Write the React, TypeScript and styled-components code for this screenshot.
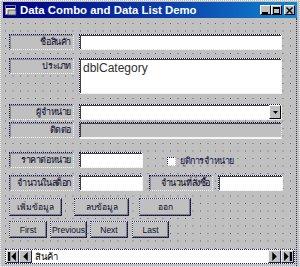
import React from 'react'
import styled, { createGlobalStyle, css } from 'styled-components'

const GlobalStyle = createGlobalStyle`
  html, body {
    margin: 0;
    padding: 0;
    background: #c0c0c0;
  }
  body {
    font-family: "Liberation Sans", "Noto Sans", "DejaVu Sans", sans-serif;
    font-size: 11px;
  }
`

const Window = styled.div`
  box-sizing: border-box;
  width: 300px;
  height: 267px;
  background: #c0c0c0;
  border: 1px dotted #f0f0f0;
  padding: 1px 2px 0 2px;
  display: flex;
  flex-direction: column;
  overflow: hidden;
`

const TitleBar = styled.div`
  height: 16px;
  flex: none;
  background: linear-gradient(to right, #000080 0%, #0a3ea8 55%, #1084d0 100%);
  display: flex;
  align-items: center;
  padding: 0 2px 0 2px;
`

const TitleText = styled.span`
  color: #fff;
  font-weight: 700;
  font-size: 11.4px;
  margin-left: 3px;
  flex: 1;
  white-space: nowrap;
`

const CaptionButton = styled.div<{ $gap?: number }>`
  box-sizing: border-box;
  width: 11px;
  height: 10px;
  margin-left: ${p => p.$gap ?? 0}px;
  background: #c0c0c0;
  border: 1px solid;
  border-color: #fff #000 #000 #fff;
  display: flex;
  align-items: center;
  justify-content: center;
`

const Form = styled.div`
  flex: 1;
  background-color: #c0c0c0;
  background-image: conic-gradient(from 0deg at 1px 1px, transparent 270deg, #5a5a5a 0);
  background-size: 7.5px 7.5px;
  background-position: 2px 5px;
  display: flex;
  flex-direction: column;
  border-right: 1px dotted #303060;
`

const Rows = styled.div`
  padding-left: 6px;
  display: flex;
  flex-direction: column;
`

const Row = styled.div<{ $top: number }>`
  display: flex;
  align-items: flex-start;
  margin-top: ${p => p.$top}px;
`

const FieldLabel = styled.div<{ $w?: number; $ml?: number }>`
  box-sizing: border-box;
  width: ${p => p.$w ?? 65}px;
  height: 16px;
  margin-left: ${p => p.$ml ?? 0}px;
  background: #c0c0c0;
  border: 1px dotted;
  border-color: #10105a #f6f6f6 #f6f6f6 #10105a;
  box-shadow: inset 1px 1px 0 #8a8a9a;
  display: flex;
  align-items: center;
  justify-content: flex-end;
  padding-right: 2px;
  color: #06062a;
  font-size: 9px;
  letter-spacing: -0.4px;
  white-space: nowrap;
  overflow: hidden;
`

const TextBox = styled.div<{ $w: number; $h?: number; $ml?: number; $gray?: boolean }>`
  box-sizing: border-box;
  width: ${p => p.$w}px;
  height: ${p => p.$h ?? 16}px;
  margin-left: ${p => p.$ml ?? 5}px;
  border: 1px dotted;
  border-color: #10105a #e8e8e8 #e8e8e8 #10105a;
  box-shadow: inset 1px 1px 0 #404040;
  display: flex;
  align-items: flex-start;
  ${p =>
    p.$gray
      ? css`
          background: #c0c0c0;
          border-bottom: 2px solid #f4f4f4;
        `
      : css`
          background: #fff;
        `}
`

const ListText = styled.span`
  color: #303030;
  font-size: 12px;
  margin: 2px 0 0 3px;
`

const DropButton = styled.div`
  box-sizing: border-box;
  width: 12px;
  height: 14px;
  margin-left: auto;
  background: #c0c0c0;
  border: 1px solid;
  border-color: #fff #000 #000 #fff;
  display: flex;
  align-items: center;
  justify-content: center;
`

const CheckWrap = styled.div`
  display: flex;
  align-items: center;
  margin: 2px 0 0 24px;
  color: #10104a;
  font-size: 9px;
  letter-spacing: -0.4px;
`

const CheckBox = styled.div`
  box-sizing: border-box;
  width: 9px;
  height: 9px;
  background: #fff;
  border: 1px dotted;
  border-color: #10105a #c0c0c0 #c0c0c0 #10105a;
  margin-right: 4px;
`

const Button = styled.div<{ $w: number; $h: number; $ml: number }>`
  box-sizing: border-box;
  width: ${p => p.$w}px;
  height: ${p => p.$h}px;
  margin-left: ${p => p.$ml}px;
  background: #c0c0c0;
  border: 1px solid;
  border-color: #f4f4f4 #10104a #10104a #f4f4f4;
  box-shadow: inset -1px -1px 0 #808080;
  outline: 1px dotted #30306a;
  outline-offset: -1px;
  display: flex;
  align-items: center;
  justify-content: center;
  color: #101030;
  font-size: 8.5px;
  white-space: nowrap;
`

const DataControl = styled.div`
  box-sizing: border-box;
  height: 15px;
  margin: 11px 0 0 2px;
  width: 290px;
  display: flex;
  align-items: stretch;
  background: #fff;
  border: 1px dotted #20206a;
`

const NavButton = styled.div`
  box-sizing: border-box;
  width: 13px;
  flex: none;
  background: #c0c0c0;
  border: 1px solid;
  border-color: #f4f4f4 #202040 #202040 #f4f4f4;
  display: flex;
  align-items: center;
  justify-content: center;
`

const Caption = styled.span`
  flex: 1;
  color: #000;
  font-size: 9.5px;
  padding-left: 3px;
  line-height: 13px;
`

const Tri = ({ dir, bar }: { dir: 'l' | 'r'; bar?: boolean }) => (
  <svg width="9" height="9" viewBox="0 0 8 8">
    {dir === 'l' ? (
      <>
        {bar && <rect x="0" y="0" width="2" height="8" fill="#000" />}
        <polygon points={bar ? '7,0 3,4 7,8' : '6,0 2,4 6,8'} fill="#000" />
      </>
    ) : (
      <>
        <polygon points={bar ? '1,0 5,4 1,8' : '2,0 6,4 2,8'} fill="#000" />
        {bar && <rect x="6" y="0" width="2" height="8" fill="#000" />}
      </>
    )}
  </svg>
)

const FormIcon = () => (
  <svg width="12" height="11" viewBox="0 0 12 11">
    <rect x="0.5" y="0.5" width="10" height="9" fill="#fff" stroke="#808080" />
    <rect x="1" y="1" width="9" height="2" fill="#000080" />
    <rect x="3" y="5" width="8" height="5" fill="#c0c0c0" stroke="#404040" strokeWidth="0.8" />
  </svg>
)

const App = () => {
  return (
    <>
      <GlobalStyle />
      <Window>
        <TitleBar>
          <FormIcon />
          <TitleText>Data Combo and Data List Demo</TitleText>
          <CaptionButton>
            <svg width="7" height="7" viewBox="0 0 7 7"><rect x="0" y="5" width="6" height="2" fill="#000" /></svg>
          </CaptionButton>
          <CaptionButton>
            <svg width="7" height="7" viewBox="0 0 7 7"><rect x="0.5" y="0.5" width="6" height="6" fill="none" stroke="#000" /><rect x="0" y="0" width="7" height="2" fill="#000" /></svg>
          </CaptionButton>
          <CaptionButton $gap={2}>
            <svg width="7" height="7" viewBox="0 0 7 7"><path d="M0.5 0.5 L6.5 6.5 M6.5 0.5 L0.5 6.5" stroke="#000" strokeWidth="1.4" /></svg>
          </CaptionButton>
        </TitleBar>
        <Form>
          <Rows>
            <Row $top={16}>
              <FieldLabel>ชื่อสินค้า</FieldLabel>
              <TextBox $w={203} />
            </Row>
            <Row $top={8}>
              <FieldLabel>ประเภท</FieldLabel>
              <TextBox $w={203} $h={36}>
                <ListText>dblCategory</ListText>
              </TextBox>
            </Row>
            <Row $top={10}>
              <FieldLabel>ผู้จำหน่าย</FieldLabel>
              <TextBox $w={203}>
                <DropButton>
                  <svg width="5" height="3" viewBox="0 0 5 3"><polygon points="0,0 5,0 2.5,3" fill="#000" /></svg>
                </DropButton>
              </TextBox>
            </Row>
            <Row $top={2}>
              <FieldLabel>ติดต่อ</FieldLabel>
              <TextBox $w={203} $h={17} $gray />
            </Row>
            <Row $top={13}>
              <FieldLabel>ราคาต่อหน่วย</FieldLabel>
              <TextBox $w={64} />
              <CheckWrap>
                <CheckBox />
                ยุติการจำหน่าย
              </CheckWrap>
            </Row>
            <Row $top={7}>
              <FieldLabel>จำนวนในสต็อก</FieldLabel>
              <TextBox $w={64} />
              <FieldLabel $ml={6} $w={64}>จำนวนที่สั่งซื้อ</FieldLabel>
              <TextBox $w={65} />
            </Row>
            <Row $top={7}>
              <Button $w={53} $h={18} $ml={0}>เพิ่มข้อมูล</Button>
              <Button $w={55} $h={18} $ml={12}>ลบข้อมูล</Button>
              <Button $w={52} $h={18} $ml={10}>ออก</Button>
            </Row>
            <Row $top={5}>
              <Button $w={38} $h={17} $ml={0}>First</Button>
              <Button $w={37} $h={17} $ml={3}>Previous</Button>
              <Button $w={38} $h={17} $ml={3}>Next</Button>
              <Button $w={37} $h={17} $ml={4}>Last</Button>
            </Row>
          </Rows>
          <DataControl>
            <NavButton><Tri dir="l" bar /></NavButton>
            <NavButton><Tri dir="l" /></NavButton>
            <Caption>สินค้า</Caption>
            <NavButton><Tri dir="r" /></NavButton>
            <NavButton><Tri dir="r" bar /></NavButton>
          </DataControl>
        </Form>
      </Window>
    </>
  )
}

export default App
